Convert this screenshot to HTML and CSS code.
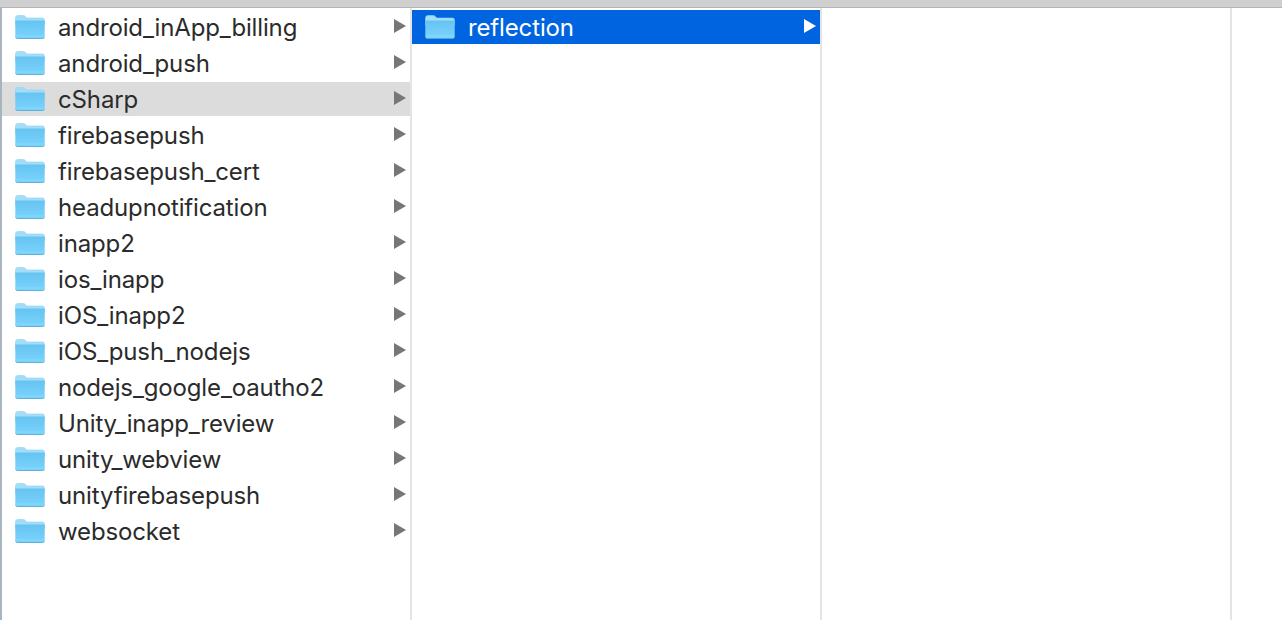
FILE: index.html
```html
<!DOCTYPE html>
<html lang="en">

<head>
    <meta charset="UTF-8">
    <title>Finder</title>
    <link rel="stylesheet" href="styles.css">
</head>

<body>
    <svg class="defs" width="0" height="0" aria-hidden="true">
        <defs>
            <linearGradient id="folderFront" x1="0" y1="0" x2="0" y2="1">
                <stop offset="0" stop-color="#66c4f2" />
                <stop offset="1" stop-color="#7ad3fb" />
            </linearGradient>
            <symbol id="folder" viewBox="0 0 30 24">
                <path d="M0.5 3 Q0.5 0.5 3 0.5 H8 Q9.6 0.5 10.6 1.8 L11.6 3 H27.5 Q29.5 3 29.5 5 V10 H0.5 Z" fill="#a2ddf9" stroke="#8bd2f5" stroke-width="0.6" />
                <path d="M0.3 5.6 H29.7 V21.5 Q29.7 23.6 27.6 23.6 H2.4 Q0.3 23.6 0.3 21.5 Z" fill="url(#folderFront)" />
                <path d="M0.5 21 H29.5" fill="none" stroke="#93dcfc" stroke-width="0.7" />
                <path d="M0.5 22.4 Q1 23.5 2.4 23.5 H27.6 Q29 23.5 29.5 22.4" fill="none" stroke="#5aa8d4" stroke-width="0.9" />
            </symbol>
        </defs>
    </svg>

    <div class="toolbar-edge"></div>

    <div class="browser">
        <!-- first column -->
        <div class="column">
            <div class="row"><svg class="folder"><use href="#folder" /></svg><span class="name">android_inApp_billing</span><span class="arrow"></span></div>
            <div class="row"><svg class="folder"><use href="#folder" /></svg><span class="name">android_push</span><span class="arrow"></span></div>
            <div class="row parent"><svg class="folder"><use href="#folder" /></svg><span class="name">cSharp</span><span class="arrow"></span></div>
            <div class="row"><svg class="folder"><use href="#folder" /></svg><span class="name">firebasepush</span><span class="arrow"></span></div>
            <div class="row"><svg class="folder"><use href="#folder" /></svg><span class="name">firebasepush_cert</span><span class="arrow"></span></div>
            <div class="row"><svg class="folder"><use href="#folder" /></svg><span class="name">headupnotification</span><span class="arrow"></span></div>
            <div class="row"><svg class="folder"><use href="#folder" /></svg><span class="name">inapp2</span><span class="arrow"></span></div>
            <div class="row"><svg class="folder"><use href="#folder" /></svg><span class="name">ios_inapp</span><span class="arrow"></span></div>
            <div class="row"><svg class="folder"><use href="#folder" /></svg><span class="name">iOS_inapp2</span><span class="arrow"></span></div>
            <div class="row"><svg class="folder"><use href="#folder" /></svg><span class="name">iOS_push_nodejs</span><span class="arrow"></span></div>
            <div class="row"><svg class="folder"><use href="#folder" /></svg><span class="name">nodejs_google_oautho2</span><span class="arrow"></span></div>
            <div class="row"><svg class="folder"><use href="#folder" /></svg><span class="name">Unity_inapp_review</span><span class="arrow"></span></div>
            <div class="row"><svg class="folder"><use href="#folder" /></svg><span class="name">unity_webview</span><span class="arrow"></span></div>
            <div class="row"><svg class="folder"><use href="#folder" /></svg><span class="name">unityfirebasepush</span><span class="arrow"></span></div>
            <div class="row"><svg class="folder"><use href="#folder" /></svg><span class="name">websocket</span><span class="arrow"></span></div>
        </div>

        <!-- second column -->
        <div class="column">
            <div class="row selected"><svg class="folder"><use href="#folder" /></svg><span class="name">reflection</span><span class="arrow"></span></div>
        </div>

        <div class="column"></div>
        <div class="column-rest"></div>
    </div>
</body>

</html>
```

FILE: styles.css
```css
html,
body {
    height: 100%;
}

body {
    margin: 0;
    background-color: #fff;
    color: #2b2b2b;
    font-family: Inter, 'Liberation Sans', sans-serif;
    overflow: hidden;
}

.defs {
    display: block;
}

.toolbar-edge {
    height: 7px;
    background-color: #cfcfcf;
    border-bottom: 1px solid #b3b3b3;
}

.browser {
    display: flex;
    height: 612px;
    border-left: 2px solid #a9b4c1;
}

.column {
    flex: none;
    width: 408px;
    padding-top: 2px;
    border-right: 2px solid #e4e4e4;
}

.column-rest {
    flex: 1;
}

.row {
    display: flex;
    align-items: center;
    height: 34px;
    margin-bottom: 2px;
    font-size: 24px;
    letter-spacing: -0.14px;
    white-space: nowrap;
}

.folder {
    flex: none;
    width: 30px;
    height: 24px;
    margin-left: 13px;
}

.name {
    flex: 1;
    margin-left: 13px;
}

.arrow {
    flex: none;
    width: 0;
    height: 0;
    margin-right: 4px;
    margin-bottom: 2px;
    border-left: 12px solid #777;
    border-top: 7px solid transparent;
    border-bottom: 7px solid transparent;
}

.parent {
    background-color: #dcdcdc;
}

.selected {
    background-color: #0064e1;
    color: #fff;
}

.selected .arrow {
    border-left-color: #fff;
}
```
